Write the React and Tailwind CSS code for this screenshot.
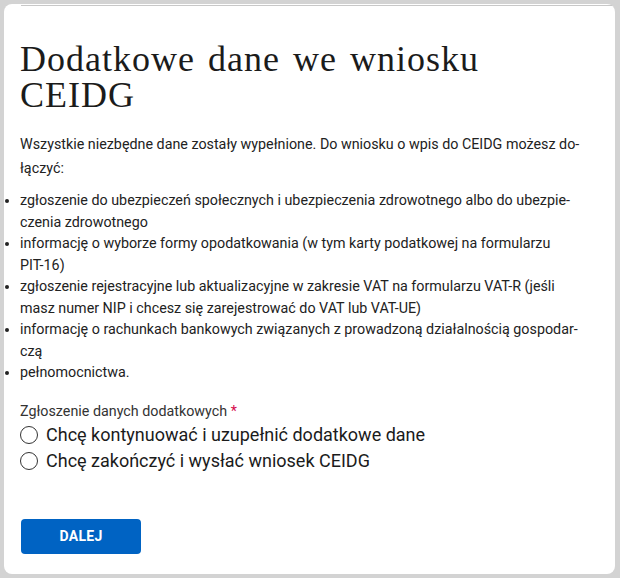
import React from 'react';

const items = [
  ['zgłoszenie do ubezpieczeń społecznych i ubezpieczenia zdrowotnego albo do ubezpie-', 'czenia zdrowotnego'],
  ['informację o wyborze formy opodatkowania (w tym karty podatkowej na formularzu', 'PIT-16)'],
  ['zgłoszenie rejestracyjne lub aktualizacyjne w zakresie VAT na formularzu VAT-R (jeśli', 'masz numer NIP i chcesz się zarejestrować do VAT lub VAT-UE)'],
  ['informację o rachunkach bankowych związanych z prowadzoną działalnością gospodar-', 'czą'],
  ['pełnomocnictwa.'],
];

const options = [
  'Chcę kontynuować i uzupełnić dodatkowe dane',
  'Chcę zakończyć i wysłać wniosek CEIDG',
];

export default function App() {
  const [choice, setChoice] = React.useState(null);

  return (
    <div className="min-h-[578px] bg-[#d3d3d3] pt-[4px] pb-[4px] pl-[4px] pr-[5px] font-['Roboto',sans-serif]">
      <div className="bg-white rounded-lg h-[570px] flex flex-col px-4">
        {/* top divider */}
        <div className="h-px bg-[#c8c8c8] ml-[1px] mr-[-13px] mt-[1px]" />

        <h1 className="mt-[35px] text-[36px] leading-[36px] tracking-[1px] [word-spacing:3px] text-[#1b1b1b] font-['Liberation_Serif',serif]">
          Dodatkowe dane we wniosku
          <br />
          CEIDG
        </h1>

        <p className="mt-[19px] text-[14.3px] leading-[24px] text-[#222] whitespace-nowrap">
          <span className="block">Wszystkie niezbędne dane zostały wypełnione. Do wniosku o wpis do CEIDG możesz do-</span>
          <span className="block">łączyć:</span>
        </p>

        <ul className="mt-[10px] list-disc list-outside text-[14.3px] leading-[21.5px] text-[#222] whitespace-nowrap">
          {items.map((lines, i) => (
            <li key={i}>
              {lines.map((l, j) => (
                <span key={j} className="block">{l}</span>
              ))}
            </li>
          ))}
        </ul>

        <div className="mt-[17px] text-[14.3px] leading-[20px] text-[#333]">
          Zgłoszenie danych dodatkowych <span className="text-[#d5094c]">*</span>
        </div>

        <div className="mt-[1px] flex flex-col">
          {options.map((o, i) => (
            <label key={i} className="flex items-center gap-2 h-[26px] cursor-pointer">
              <span
                className="w-[18px] h-[18px] rounded-full border-[1.5px] border-[#333] flex items-center justify-center shrink-0"
                onClick={() => setChoice(i)}
              >
                {choice === i && <span className="w-[10px] h-[10px] rounded-full bg-[#0063c3]" />}
              </span>
              <span className="text-[18px] leading-[26px] text-[#1b1b1b]" onClick={() => setChoice(i)}>{o}</span>
            </label>
          ))}
        </div>

        <button className="mt-[45px] ml-[1px] w-[120px] h-[35px] rounded bg-[#0063c3] text-white text-[14px] font-bold tracking-[0.3px]">
          DALEJ
        </button>
      </div>
    </div>
  );
}
